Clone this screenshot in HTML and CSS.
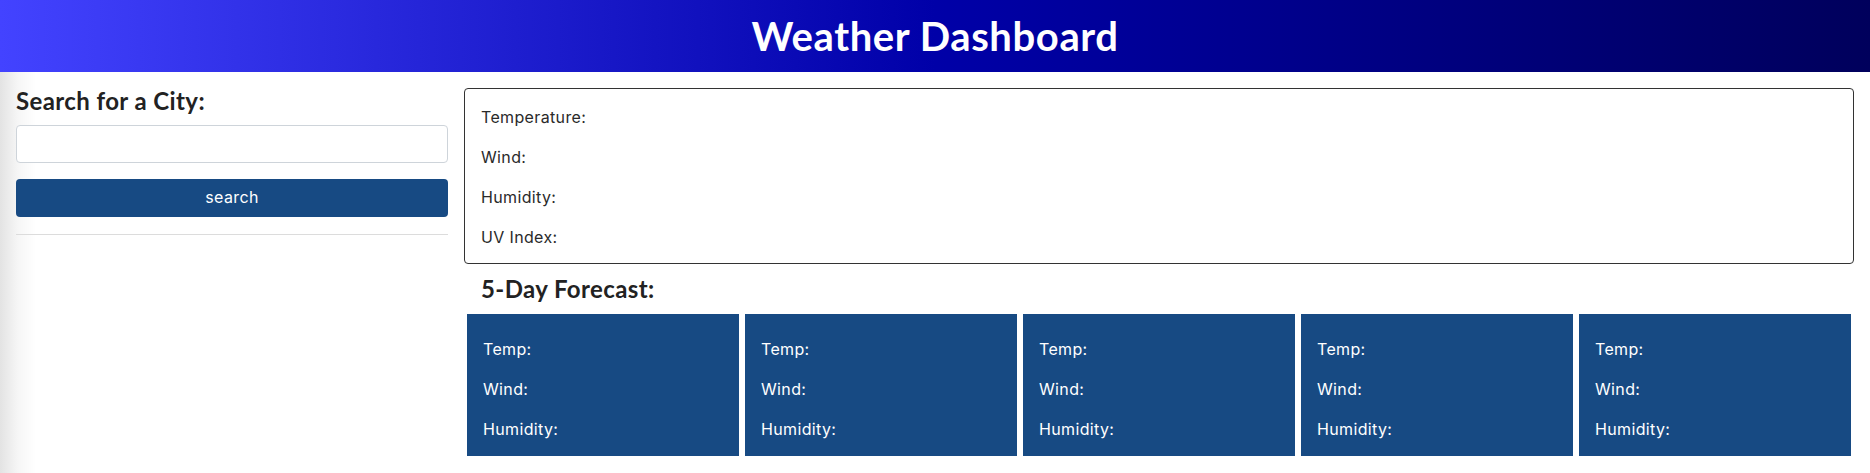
FILE: index.html
```html
<!DOCTYPE html>
<html lang="en">
<head>
<meta charset="utf-8">
<title>Weather Dashboard</title>
<link rel="stylesheet" href="styles.css">
</head>
<body>
<header class="topbar">
  <h1 class="title">Weather Dashboard</h1>
</header>
<div class="layout">
  <aside class="sidebar">
    <h2 class="heading">Search for a City:</h2>
    <input class="city-input" type="text" aria-label="City">
    <button class="search-btn" type="button">search</button>
    <hr class="divider">
  </aside>
  <main class="content">
    <section class="current">
      <p class="stat">Temperature:</p>
      <p class="stat">Wind:</p>
      <p class="stat">Humidity:</p>
      <p class="stat">UV Index:</p>
    </section>
    <h2 class="heading forecast-heading">5-Day Forecast:</h2>
    <div class="forecast">
      <div class="card"><p class="stat">Temp:</p><p class="stat">Wind:</p><p class="stat">Humidity:</p></div>
      <div class="card"><p class="stat">Temp:</p><p class="stat">Wind:</p><p class="stat">Humidity:</p></div>
      <div class="card"><p class="stat">Temp:</p><p class="stat">Wind:</p><p class="stat">Humidity:</p></div>
      <div class="card"><p class="stat">Temp:</p><p class="stat">Wind:</p><p class="stat">Humidity:</p></div>
      <div class="card"><p class="stat">Temp:</p><p class="stat">Wind:</p><p class="stat">Humidity:</p></div>
    </div>
  </main>
</div>
</body>
</html>
```
FILE: styles.css
```css
* { box-sizing: border-box; }

html, body {
  margin: 0;
  background: #fff;
  color: #212529;
  font-family: Inter, "Open Sans", "Liberation Sans", sans-serif;
}

.topbar {
  height: 72px;
  display: flex;
  align-items: center;
  justify-content: center;
  background: linear-gradient(90deg, #4343ff 0%, #0000a8 50%, #00005c 100%);
}

.title {
  margin: 0;
  color: #fff;
  font-family: Lato, "Liberation Sans", sans-serif;
  font-weight: 700;
  font-size: 40px;
  line-height: 1;
  letter-spacing: 0.6px;
}

.layout {
  display: grid;
  grid-template-columns: 464px 1fr;
  min-height: 401px;
}

.sidebar {
  padding: 14px 16px 0 16px;
  background: linear-gradient(90deg, #e3e3e3 0px, #f6f6f6 18px, #ffffff 36px);
}

.heading {
  margin: 0 0 10px;
  font-family: Lato, "Liberation Sans", sans-serif;
  font-weight: 700;
  font-size: 24px;
  line-height: 29px;
  letter-spacing: 0.4px;
  color: #222;
}

.city-input {
  display: block;
  width: 100%;
  height: 38px;
  border: 1px solid #ced4da;
  border-radius: 4px;
  background: #fff;
  margin: 0 0 16px;
}

.search-btn {
  display: block;
  width: 100%;
  height: 38px;
  border: none;
  border-radius: 4px;
  background: #174a83;
  color: #fff;
  font-family: Inter, "Open Sans", sans-serif;
  font-size: 16px;
  letter-spacing: 0.4px;
  padding: 0 0 2px;
  margin: 0 0 17px;
}

.divider {
  margin: 0;
  border: none;
  border-top: 1px solid #dcdcdc;
}

.content {
  padding: 16px 16px 0 0;
}

.current {
  border: 1px solid #333;
  border-radius: 4px;
  padding: 16px 16px 14px 16px;
  display: flex;
  flex-direction: column;
  gap: 16px;
}

.stat {
  margin: 0;
  font-size: 16px;
  line-height: 24px;
  letter-spacing: 0.35px;
  color: #2a2a2a;
}

.forecast-heading {
  margin: 10px 0 11px 17px;
}

.forecast {
  display: grid;
  grid-template-columns: repeat(5, 1fr);
  gap: 6px;
  padding: 0 3px;
}

.card {
  height: 142px;
  background: #174a83;
  padding: 23px 16px 15px;
  display: flex;
  flex-direction: column;
  gap: 16px;
}

.card .stat {
  color: #fff;
}
```
